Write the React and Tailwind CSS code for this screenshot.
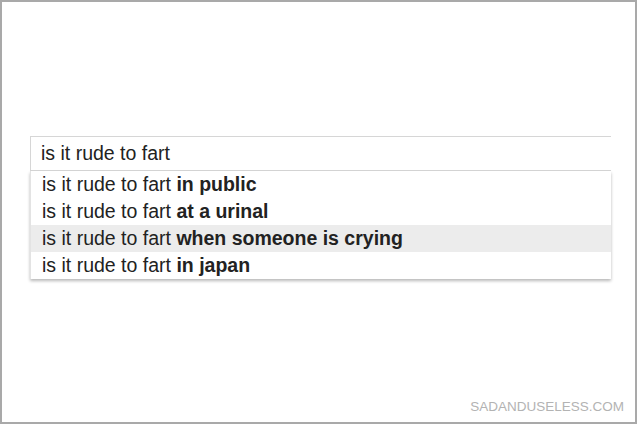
export default function App() {
  const query = 'is it rude to fart';
  const suggestions = [
    { rest: 'in public', active: false },
    { rest: 'at a urinal', active: false },
    { rest: 'when someone is crying', active: true },
    { rest: 'in japan', active: false },
  ];

  return (
    <div className="h-[426px] w-[640px] bg-white font-['Liberation_Sans',Arial,sans-serif] text-[#222]">
      <div className="flex h-[424px] w-[637px] flex-col border-2 border-[#a9a9a9] bg-white">
        <div className="mt-[134px] ml-[28px] w-[581px]">
          <div className="flex h-[35px] items-center border border-r-0 border-[#d6d6d6] pl-[10px] text-[19.5px] leading-none">
            {query}
          </div>
          <ul className="border-l border-[#e3e3e3] bg-white shadow-[0_2px_3px_rgba(0,0,0,0.28)]">
            {suggestions.map((s) => (
              <li
                key={s.rest}
                className={`flex h-[27px] items-center pl-[11px] text-[19.5px] leading-none ${s.active ? 'bg-[#ececec]' : ''}`}
              >
                <span className="whitespace-pre">{query} </span>
                <b className="font-bold">{s.rest}</b>
              </li>
            ))}
          </ul>
        </div>
        <p className="mt-auto mr-[11px] mb-[7px] self-end text-[13.5px] leading-4 text-[#b3b3b3]">SADANDUSELESS.COM</p>
      </div>
    </div>
  );
}
